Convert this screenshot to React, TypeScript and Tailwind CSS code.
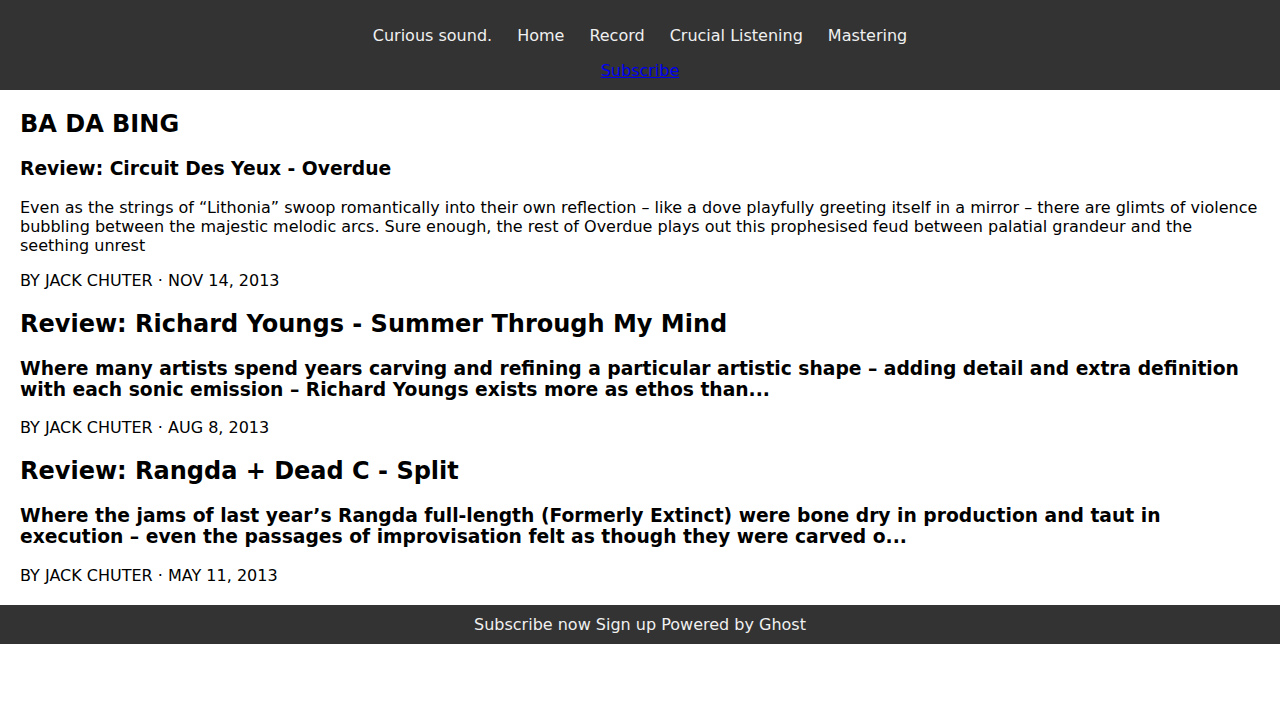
import React from 'react'

const posts = [
  {
    title: 'Review: Circuit Des Yeux - Overdue',
    small: true,
    excerpt:
      'Even as the strings of \u201cLithonia\u201d swoop romantically into their own reflection \u2013 like a dove playfully greeting itself in a mirror \u2013 there are glimts of violence bubbling between the majestic melodic arcs. Sure enough, the rest of Overdue plays out this prophesised feud between palatial grandeur and the seething unrest',
    meta: 'BY JACK CHUTER \u00b7 NOV 14, 2013',
    metaGap: 'mt-[16px]',
  },
  {
    title: 'Review: Richard Youngs - Summer Through My Mind',
    small: false,
    excerpt:
      'Where many artists spend years carving and refining a particular artistic shape \u2013 adding detail and extra definition with each sonic emission \u2013 Richard Youngs exists more as ethos than...',
    meta: 'BY JACK CHUTER \u00b7 AUG 8, 2013',
    metaGap: 'mt-[18px]',
  },
  {
    title: 'Review: Rangda + Dead C - Split',
    small: false,
    excerpt:
      'Where the jams of last year\u2019s Rangda full-length (Formerly Extinct) were bone dry in production and taut in execution \u2013 even the passages of improvisation felt as though they were carved o...',
    meta: 'BY JACK CHUTER \u00b7 MAY 11, 2013',
    metaGap: 'mt-[19px]',
  },
]

const navItems = ['Curious sound.', 'Home', 'Record', 'Crucial Listening', 'Mastering']

export default function App() {
  return (
    <div className="min-h-screen bg-white text-black font-['DejaVu_Sans',sans-serif] leading-[normal]">
      <header className="bg-[#333333] pt-[26px] pb-[10px] flex flex-col items-center">
        <nav className="flex justify-center gap-[25px] text-[16px] text-[#f0f0f0]">
          {navItems.map(item => (
            <a key={item} href="#" className="leading-[19px]">
              {item}
            </a>
          ))}
        </nav>
        <a href="#" className="mt-[16px] text-[16px] leading-[19px] text-[#0000ee] underline">
          Subscribe
        </a>
      </header>

      <main className="px-5 pt-[20px] pb-[20px]">
        <h1 className="text-[24px] font-bold leading-[28px]">BA DA BING</h1>
        {posts.map((post, i) => (
          <article key={i} className="mt-[20px]">
            {post.small ? (
              <h3 className="text-[18.72px] font-bold leading-[22px]">{post.title}</h3>
            ) : (
              <h2 className="text-[24px] font-bold leading-[28px]">{post.title}</h2>
            )}
            {post.small ? (
              <p className="mt-[18px] text-[16px] leading-[19px]">{post.excerpt}</p>
            ) : (
              <h3 className="mt-[20px] text-[18.72px] font-bold leading-[21px]">{post.excerpt}</h3>
            )}
            <p className={`${post.metaGap} text-[16px] leading-[19px]`}>{post.meta}</p>
          </article>
        ))}
      </main>

      <footer className="bg-[#333333] py-[10px] text-center text-[16px] leading-[19px] text-[#f0f0f0]">
        Subscribe now Sign up Powered by Ghost
      </footer>
    </div>
  )
}
